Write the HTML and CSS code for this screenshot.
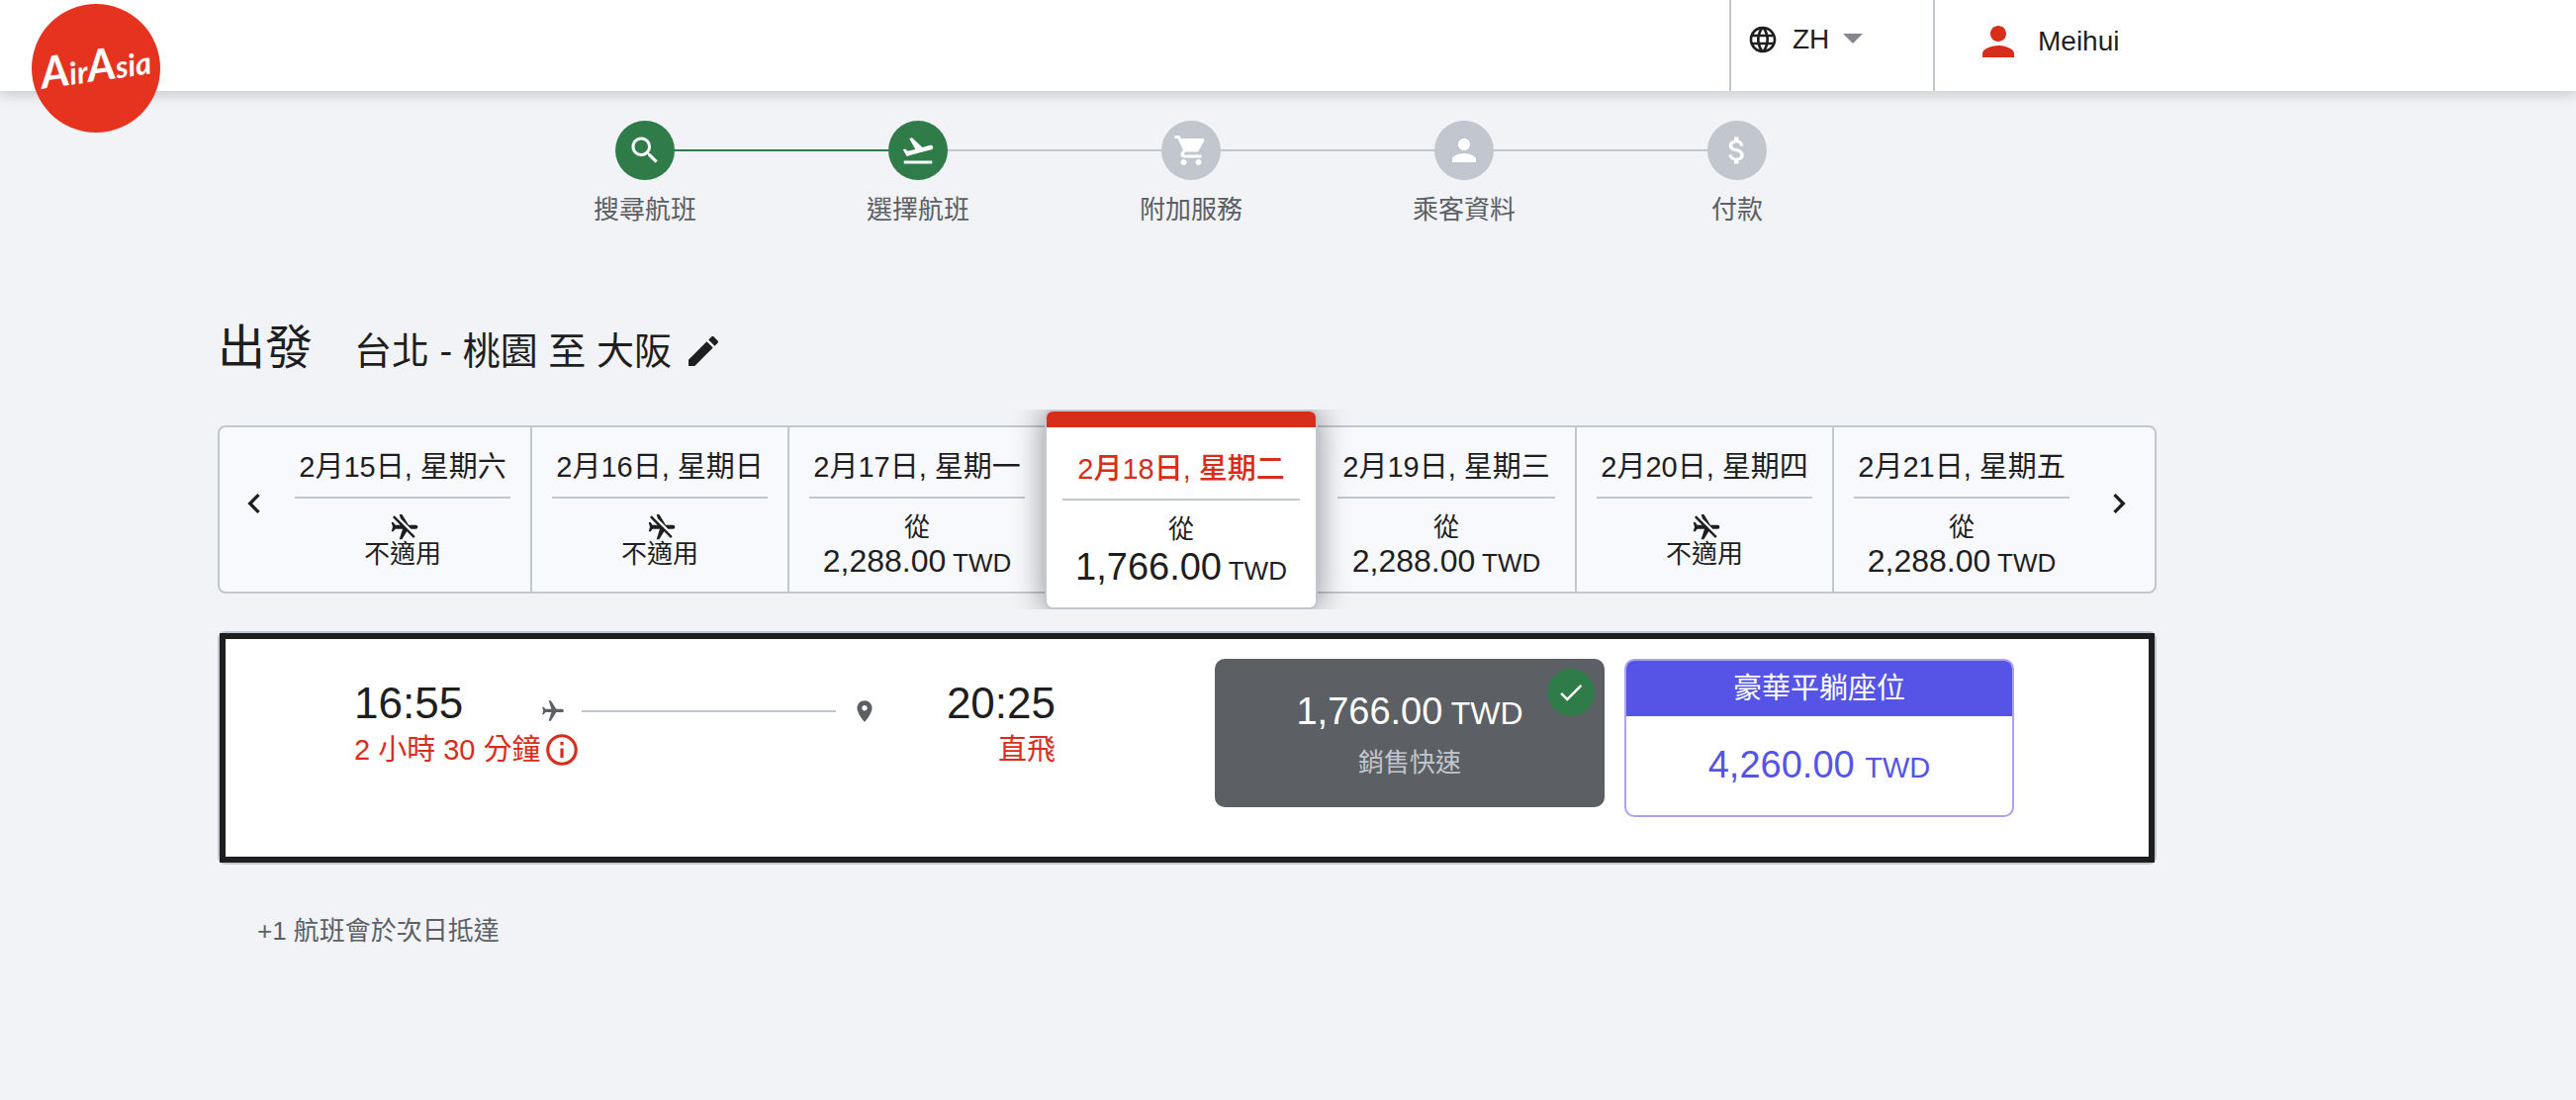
FILE: index.html
```html
<!DOCTYPE html>
<html lang="zh-Hant">
<head>
<meta charset="utf-8">
<meta name="viewport" content="width=device-width, initial-scale=1">
<title>AirAsia 選擇航班</title>
<link rel="stylesheet" href="styles.css">
</head>
<body>
<svg class="sprite" aria-hidden="true">
  <symbol id="no-flight" viewBox="0 0 24 24"><path transform="matrix(0 -1 -1 0 24 24)" d="M13 9V3.5c0-.83-.67-1.5-1.5-1.5S10 2.67 10 3.5v3.68l7.83 7.83L21 16v-2l-8-5zM3 5.27l4.99 4.99L2 14v2l8-2.5V19l-2 1.5V22l3.5-1 3.5 1v-1.5L13 19v-3.73L18.73 21 20 19.73 4.27 4 3 5.27z"/></symbol>
</svg>

<header class="header">
  <div class="header-inner">
    <a class="logo" href="#" aria-label="AirAsia">
      <svg viewBox="0 0 130 130" width="130" height="130"><circle cx="65" cy="65" r="65" fill="#e5331f"/><text class="logo-text" x="65" y="78" text-anchor="middle" transform="rotate(-8 65 65)"><tspan class="logo-cap">A</tspan>ir<tspan class="logo-cap">A</tspan>sia</text></svg>
    </a>
    <div class="language">
      <label class="language-label" for="lang" aria-label="語言"><svg class="icon-32" viewBox="0 0 24 24"><path d="M11.99 2C6.47 2 2 6.48 2 12s4.47 10 9.99 10C17.52 22 22 17.52 22 12S17.52 2 11.99 2zm6.93 6h-2.95c-.32-1.25-.78-2.45-1.38-3.56 1.84.63 3.37 1.91 4.33 3.56zM12 4.04c.83 1.2 1.48 2.53 1.91 3.96h-3.82c.43-1.43 1.08-2.76 1.91-3.96zM4.26 14C4.1 13.36 4 12.69 4 12s.1-1.36.26-2h3.38c-.08.66-.14 1.32-.14 2s.06 1.34.14 2H4.26zm.82 2h2.95c.32 1.25.78 2.45 1.38 3.56-1.84-.63-3.37-1.9-4.33-3.56zm2.95-8H5.08c.96-1.66 2.49-2.93 4.33-3.56C8.81 5.55 8.35 6.75 8.03 8zM12 19.96c-.83-1.2-1.48-2.53-1.91-3.96h3.82c-.43 1.43-1.08 2.76-1.91 3.96zM14.34 14H9.66c-.09-.66-.16-1.32-.16-2s.07-1.35.16-2h4.68c.09.65.16 1.32.16 2s-.07 1.34-.16 2zm.25 5.56c.6-1.11 1.06-2.31 1.38-3.56h2.95c-.96 1.65-2.49 2.93-4.33 3.56zM16.36 14c.08-.66.14-1.32.14-2s-.06-1.34-.14-2h3.38c.16.64.26 1.31.26 2s-.1 1.36-.26 2h-3.38z"/></svg></label>
      <select class="language-select" id="lang"><option>ZH</option></select>
      <svg class="language-arrow" viewBox="0 0 20 10" width="20" height="10"><path d="M0 0h20L10 10z"/></svg>
    </div>
    <a class="user" href="#">
      <svg class="user-icon" viewBox="0 0 24 24"><path d="M12 12c2.210 0 4-1.790 4-4s-1.790-4-4-4-4 1.790-4 4 1.790 4 4 4zm0 2c-2.670 0-8 1.340-8 4v2h16v-2c0-2.660-5.330-4-8-4z"/></svg>
      <span>Meihui</span>
    </a>
  </div>
</header>

<main class="main">
  <ol class="steps">
    <li class="step step-done step-first">
      <span class="step-dot"><svg class="icon-36" viewBox="0 0 24 24"><path d="M15.500 14h-.79l-.28-.27C15.410 12.590 16 11.110 16 9.500 16 5.910 13.090 3 9.500 3S3 5.910 3 9.500 5.910 16 9.500 16c1.610 0 3.090-.59 4.230-1.570l.27.28v.79l5 4.990L20.490 19l-4.990-5zm-6 0C7.010 14 5 11.990 5 9.500S7.010 5 9.500 5 14 7.010 14 9.500 11.990 14 9.500 14z"/></svg></span>
      <span class="step-label">搜尋航班</span>
    </li>
    <li class="step step-done step-current">
      <span class="step-dot"><svg class="icon-36" viewBox="0 0 24 24"><path d="M2.500 19h19v2h-19v-2zm19.570-9.360c-.21-.8-1.040-1.280-1.840-1.060L14.920 10l-6.900-6.430-1.930.51 4.140 7.170-4.970 1.330-1.970-1.540-1.450.39 1.820 3.160.77 1.330 1.600-.43 5.310-1.420 4.350-1.160L21 11.490c.81-.23 1.280-1.050 1.070-1.850z"/></svg></span>
      <span class="step-label">選擇航班</span>
    </li>
    <li class="step">
      <span class="step-dot"><svg class="icon-36" viewBox="0 0 24 24"><path d="M7 18c-1.100 0-1.990.9-1.990 2S5.900 22 7 22s2-.9 2-2-.9-2-2-2zM1 2v2h2l3.600 7.590-1.350 2.450c-.16.28-.25.61-.25.96 0 1.100.9 2 2 2h12v-2H7.420c-.14 0-.25-.11-.25-.25l.03-.12.9-1.630h7.450c.75 0 1.410-.41 1.750-1.030l3.580-6.490c.08-.14.12-.31.12-.48 0-.55-.45-1-1-1H5.210l-.94-2H1zm16 16c-1.100 0-1.990.9-1.990 2s.89 2 1.990 2 2-.9 2-2-.9-2-2-2z"/></svg></span>
      <span class="step-label">附加服務</span>
    </li>
    <li class="step">
      <span class="step-dot"><svg class="icon-36" viewBox="0 0 24 24"><path d="M12 12c2.210 0 4-1.790 4-4s-1.790-4-4-4-4 1.790-4 4 1.790 4 4 4zm0 2c-2.670 0-8 1.340-8 4v2h16v-2c0-2.660-5.330-4-8-4z"/></svg></span>
      <span class="step-label">乘客資料</span>
    </li>
    <li class="step step-last">
      <span class="step-dot"><svg class="icon-36" viewBox="0 0 24 24"><path d="M11.800 10.900c-2.270-.59-3-1.200-3-2.150 0-1.090 1.010-1.850 2.700-1.850 1.780 0 2.440.85 2.500 2.100h2.210c-.07-1.720-1.120-3.300-3.210-3.810V3h-3v2.160c-1.940.42-3.500 1.680-3.500 3.610 0 2.310 1.910 3.460 4.700 4.130 2.500.6 3 1.480 3 2.410 0 .69-.49 1.790-2.700 1.790-2.060 0-2.870-.92-2.980-2.100h-2.200c.12 2.190 1.760 3.420 3.680 3.830V21h3v-2.150c1.950-.37 3.500-1.500 3.500-3.550 0-2.840-2.430-3.810-4.700-4.400z"/></svg></span>
      <span class="step-label">付款</span>
    </li>
  </ol>

  <div class="title">
    <h1 class="title-main">出發</h1>
    <h2 class="title-route">台北 - 桃園 至 大阪</h2>
    <button class="edit" type="button" aria-label="編輯"><svg class="icon-40" viewBox="0 0 24 24"><path d="M3 17.250V21h3.750L17.810 9.940l-3.750-3.750L3 17.250zM20.710 7.040c.39-.39.39-1.020 0-1.410l-2.340-2.340c-.39-.39-1.020-.39-1.410 0l-1.830 1.830 3.750 3.750 1.830-1.830z"/></svg></button>
  </div>

  <section class="calendar" aria-label="日期">
    <button class="nav nav-prev" type="button" aria-label="上一頁"><svg class="icon-40" viewBox="0 0 24 24"><path d="M15.410 7.410L14 6l-6 6 6 6 1.410-1.410L10.830 12z"/></svg></button>
    <button class="day" type="button">
      <span class="day-date">2月15日, 星期六</span>
      <svg class="day-icon" viewBox="0 0 24 24"><use href="#no-flight"/></svg>
      <span class="day-none">不適用</span>
    </button>
    <button class="day" type="button">
      <span class="day-date">2月16日, 星期日</span>
      <svg class="day-icon" viewBox="0 0 24 24"><use href="#no-flight"/></svg>
      <span class="day-none">不適用</span>
    </button>
    <button class="day day-plain" type="button">
      <span class="day-date">2月17日, 星期一</span>
      <span class="day-from">從</span>
      <span class="day-price">2,288.00<span class="day-currency"> TWD</span></span>
    </button>
    <button class="day day-selected" type="button">
      <span class="day-date">2月18日, 星期二</span>
      <span class="day-from">從</span>
      <span class="day-price">1,766.00<span class="day-currency"> TWD</span></span>
    </button>
    <button class="day" type="button">
      <span class="day-date">2月19日, 星期三</span>
      <span class="day-from">從</span>
      <span class="day-price">2,288.00<span class="day-currency"> TWD</span></span>
    </button>
    <button class="day" type="button">
      <span class="day-date">2月20日, 星期四</span>
      <svg class="day-icon" viewBox="0 0 24 24"><use href="#no-flight"/></svg>
      <span class="day-none">不適用</span>
    </button>
    <button class="day day-plain" type="button">
      <span class="day-date">2月21日, 星期五</span>
      <span class="day-from">從</span>
      <span class="day-price">2,288.00<span class="day-currency"> TWD</span></span>
    </button>
    <button class="nav nav-next" type="button" aria-label="下一頁"><svg class="icon-40" viewBox="0 0 24 24"><path d="M10 6L8.590 7.410 13.170 12l-4.580 4.590L10 18l6-6z"/></svg></button>
  </section>

  <section class="flight">
    <div class="flight-body">
      <div class="leg">
        <div class="leg-row">
          <span class="leg-time">16:55</span>
          <div class="leg-path">
            <svg class="icon-26" viewBox="0 0 24 24"><path transform="rotate(90 12 12)" d="M21 16v-2l-8-5V3.500c0-.83-.67-1.500-1.500-1.500S10 2.670 10 3.500V9l-8 5v2l8-2.500V19l-2 1.500V22l3.500-1 3.500 1v-1.500L13 19v-5.500l8 2.500z"/></svg>
            <span class="leg-line"></span>
            <svg class="icon-26" viewBox="0 0 24 24"><path d="M12 2C8.130 2 5 5.130 5 9c0 5.250 7 13 7 13s7-7.750 7-13c0-3.870-3.130-7-7-7zm0 9.500c-1.380 0-2.500-1.120-2.500-2.500s1.120-2.500 2.500-2.500 2.500 1.120 2.500 2.500-1.120 2.500-2.500 2.500z"/></svg>
          </div>
          <span class="leg-time">20:25</span>
        </div>
        <div class="leg-row leg-info">
          <span>2 小時 30 分鐘</span>
          <button class="info" type="button" aria-label="航班詳情"><svg class="icon-38" viewBox="0 0 24 24"><path d="M11 17h2v-6h-2v6zm1-15C6.480 2 2 6.480 2 12s4.480 10 10 10 10-4.480 10-10S17.520 2 12 2zm0 18c-4.410 0-8-3.590-8-8s3.590-8 8-8 8 3.590 8 8-3.590 8-8 8zM11 9h2V7h-2v2z"/></svg></button>
          <span class="leg-stops">直飛</span>
        </div>
      </div>
      <button class="fare fare-economy" type="button">
        <span class="fare-price">1,766.00<span class="fare-currency"> TWD</span></span>
        <span class="fare-note">銷售快速</span>
        <span class="fare-check"><svg class="icon-30" viewBox="0 0 24 24"><path d="M9 16.200L4.800 12l-1.400 1.400L9 19 21 7l-1.400-1.400L9 16.200z"/></svg></span>
      </button>
      <button class="fare fare-premium" type="button">
        <span class="fare-head">豪華平躺座位</span>
        <span class="fare-price">4,260.00 <span class="fare-currency">TWD</span></span>
      </button>
    </div>
  </section>

  <p class="footnote">+1 航班會於次日抵達</p>
</main>
</body>
</html>
```

FILE: styles.css
```css
* {
  box-sizing: border-box;
}

body {
  margin: 0;
  min-height: 100vh;
  background: #f1f3f7;
  color: #1e1e1e;
  font-family: "Liberation Sans", "Noto Sans CJK TC", sans-serif;
  font-size: 26px;
  line-height: 30px;
}

button,
select {
  margin: 0;
  padding: 0;
  border: 0;
  background: none;
  color: inherit;
  font: inherit;
  cursor: pointer;
}

a {
  color: inherit;
  text-decoration: none;
}

svg {
  display: block;
  flex: none;
  fill: currentColor;
}

.sprite {
  position: absolute;
  width: 0;
  height: 0;
}

.icon-26 { width: 26px; height: 26px; }
.icon-30 { width: 30px; height: 30px; }
.icon-32 { width: 32px; height: 32px; }
.icon-36 { width: 36px; height: 36px; }
.icon-38 { width: 38px; height: 38px; }
.icon-40 { width: 40px; height: 40px; }

/* Header */

.header {
  position: relative;
  height: 92px;
  background: #fff;
  box-shadow: 0 4px 12px rgba(0, 0, 0, .17);
  font-size: 28px;
  line-height: 32px;
}

.header-inner {
  display: flex;
  max-width: 2180px;
  height: 100%;
  padding-left: 32px;
}

.logo {
  flex: none;
  height: 130px;
  margin: 4px auto 0 0;
}

.logo-text {
  fill: #fff;
  font-family: Lato, "Liberation Sans", sans-serif;
  font-size: 31px;
  font-style: italic;
  font-weight: 700;
}

.logo-cap {
  font-size: 44px;
}

.language {
  display: flex;
  align-items: flex-start;
  width: 206px;
  padding: 24px 0 0 16px;
  border-left: 2px solid #c1c6cf;
}

.language-select {
  width: 42px;
  height: 32px;
  margin: 0 9px 0 14px;
  appearance: none;
}

.language-arrow {
  margin-top: 10px;
  color: #84888e;
}

.user {
  display: flex;
  align-items: flex-start;
  width: 226px;
  padding: 18px 0 0 40px;
  border-left: 2px solid #c1c6cf;
  line-height: 48px;
}

.user-icon {
  width: 48px;
  height: 48px;
  margin-right: 16px;
  color: #d72d1b;
}

/* Progress steps */

.main {
  max-width: 2180px;
  padding: 30px 0 60px 220px;
}

.steps {
  display: grid;
  grid-template-columns: repeat(5, 1fr);
  max-width: 1388px;
  margin: 0 auto;
  padding: 0 0 0 8px;
  list-style: none;
  color: #5c5f64;
}

.step {
  display: grid;
  grid-template-columns: 1fr 60px 1fr;
  align-items: center;
  row-gap: 15px;
}

.step::before,
.step::after {
  content: "";
  height: 2px;
  background: #c1c6cf;
}

.step::before {
  order: -1;
}

.step-dot {
  display: grid;
  place-items: center;
  height: 60px;
  border-radius: 50%;
  background: #c1c6cf;
  color: #fff;
}

.step-label {
  order: 1;
  grid-column: 1 / -1;
  text-align: center;
}

.step-done .step-dot,
.step-done::before,
.step-done::after {
  background: #2f7c48;
}

.step-current::after {
  background: #c1c6cf;
}

.step-first::before,
.step-last::after {
  background: none;
}

/* Title */

.title {
  display: flex;
  align-items: baseline;
  margin-top: 95px;
}

.title-main,
.title-route {
  margin: 0;
  font-weight: 400;
}

.title-main {
  margin-right: 42px;
  font-size: 48px;
  line-height: 60px;
}

.title-route {
  font-size: 38px;
  line-height: 46px;
}

.edit {
  align-self: center;
  margin: 6px 0 0 12px;
}

/* Date strip */

.calendar {
  display: grid;
  grid-template-columns: 56px 260fr 260fr 258fr 276fr 262fr 260fr 258fr 66px;
  min-height: 170px;
  margin-top: 48px;
  border: 2px solid #c1c6cf;
  border-radius: 8px;
  background: #f8f9fd;
}

.nav {
  display: flex;
  align-items: center;
  justify-content: center;
  padding-bottom: 12px;
}

.nav-prev {
  padding-left: 14px;
}

.nav-next {
  padding-right: 6px;
}

.day {
  display: flex;
  flex-direction: column;
  align-items: center;
  padding: 20px 20px 0;
  border-right: 2px solid #c1c6cf;
}

.day-plain {
  border-right: 0;
}

.day-date {
  align-self: stretch;
  padding-bottom: 10px;
  border-bottom: 2px solid #c1c6cf;
  font-size: 29px;
  line-height: 40px;
  white-space: nowrap;
}

.day-icon {
  width: 32px;
  height: 32px;
  margin: 12px 0 0 4px;
}

.day-none {
  line-height: 24px;
}

.day-from {
  margin-top: 16px;
  line-height: 26px;
}

.day-price {
  font-size: 32px;
  line-height: 42px;
  white-space: nowrap;
}

.day-currency {
  font-size: 26px;
  line-height: 1;
}

.day-selected {
  position: relative;
  margin: -18px 0;
  padding: 0 16px;
  border: 2px solid #c1c6cf;
  border-radius: 8px;
  background: #fff;
  box-shadow: 0 0 32px rgba(0, 0, 0, .45);
  clip-path: inset(0 -40px);
}

.day-selected::before {
  content: "";
  align-self: stretch;
  height: 16px;
  margin: 0 -16px 22px;
  border-radius: 6px 6px 0 0;
  background: #d72d1b;
}

.day-selected .day-date {
  color: #d72d1b;
  font-weight: 500;
}

.day-selected .day-price {
  font-size: 38px;
  line-height: 50px;
}

.day-selected .day-currency {
  font-size: 26px;
  line-height: 1;
}

/* Flight card */

.flight {
  margin-top: 38px;
  border: 2px solid #c1c6cf;
  border-radius: 8px;
}

.flight-body {
  display: grid;
  grid-template-columns: 850fr 394fr 394fr;
  column-gap: 20px;
  align-items: start;
  padding: 20px 136px 40px 130px;
  border: 6px solid #1e1e1e;
  background: #fff;
}

.leg {
  margin-right: 141px;
  padding-top: 19px;
}

.leg-row {
  display: flex;
  align-items: center;
}

.leg-time {
  font-size: 44px;
  line-height: 52px;
}

.leg-path {
  display: flex;
  flex: 1;
  align-items: center;
  gap: 16px;
  margin: 16px 70px 0 78px;
  color: #5c5f64;
}

.leg-line {
  flex: 1;
  height: 2px;
  background: #c1c6cf;
}

.leg-info {
  color: #d72d1b;
  font-size: 29px;
  line-height: 42px;
}

.info {
  margin-left: 2px;
}

.leg-stops {
  margin-left: auto;
}

.fare {
  display: flex;
  flex-direction: column;
  align-items: center;
  border-radius: 10px;
}

.fare-price {
  font-size: 38px;
  line-height: 50px;
  white-space: nowrap;
}

.fare-economy {
  position: relative;
  padding: 28px 0 30px;
  background: #5c5f64;
  color: #fff;
}

.fare-economy .fare-currency {
  font-size: 32px;
  line-height: 1;
}

.fare-note {
  margin-top: 12px;
  color: #c1c6cf;
}

.fare-check {
  position: absolute;
  top: 10px;
  right: 10px;
  display: grid;
  place-items: center;
  width: 48px;
  height: 48px;
  border-radius: 50%;
  background: #2f7c48;
}

.fare-premium {
  overflow: hidden;
  padding-bottom: 26px;
  border: 2px solid #aaa2f2;
  background: #fff;
  color: #5654e6;
}

.fare-head {
  align-self: stretch;
  margin-bottom: 24px;
  background: #5654e6;
  color: #fff;
  font-size: 29px;
  line-height: 56px;
}

.fare-premium .fare-currency {
  font-size: 29px;
  line-height: 1;
}

.footnote {
  margin: 52px 0 0 40px;
  color: #5c5f64;
}
```
